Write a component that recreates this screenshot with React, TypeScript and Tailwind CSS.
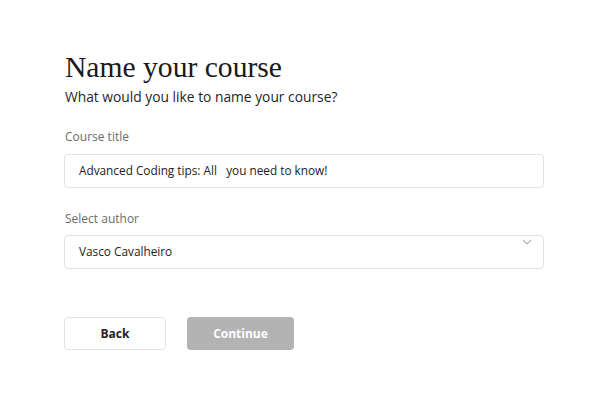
export default function App() {
  return (
    <div className="min-h-screen w-full bg-white" style={{ fontFamily: '"Open Sans", "Noto Sans", sans-serif' }}>
      <div className="pl-[64px] pr-[58px] pt-[49px]">
        <h1 className="text-[29.6px] leading-[36px] text-[#1a1a1a] pl-px" style={{ fontFamily: '"Liberation Serif", serif' }}>
          Name your course
        </h1>
        <p className="mt-[2px] text-[13.8px] leading-[19px] text-[#1f1f1f] pl-px">What would you like to name your course?</p>

        <label className="mt-[23px] block text-[12px] leading-[16px] text-[#6b6b6b] pl-px">Course title</label>
        <div className="mt-[9px] flex h-[34px] items-center rounded-[4px] border border-[#e3e3e3] px-[14px] text-[11.8px] text-[#222]">
          Advanced Coding tips: All&nbsp;&nbsp; you need to know!
        </div>

        <label className="mt-[23px] block text-[12px] leading-[16px] text-[#6b6b6b] pl-px">Select author</label>
        <div className="relative mt-[8px] flex h-[34px] items-center rounded-[4px] border border-[#e3e3e3] px-[14px] text-[11.8px] text-[#222]">
          Vasco Cavalheiro
          <svg className="absolute right-[11px] top-[3px]" width="10" height="6" viewBox="0 0 10 6" fill="none">
            <path d="M1 1l4 4 4-4" stroke="#b5b5b5" strokeWidth="1.2" />
          </svg>
        </div>

        <div className="mt-[48px] flex gap-[21px]">
          <button className="h-[33px] w-[102px] rounded-[4px] border border-[#e3e3e3] bg-white text-[12px] font-bold text-[#222]">
            Back
          </button>
          <button className="h-[33px] w-[107px] rounded-[4px] bg-[#b3b3b3] text-[12px] font-bold text-white">
            Continue
          </button>
        </div>
      </div>
    </div>
  );
}
